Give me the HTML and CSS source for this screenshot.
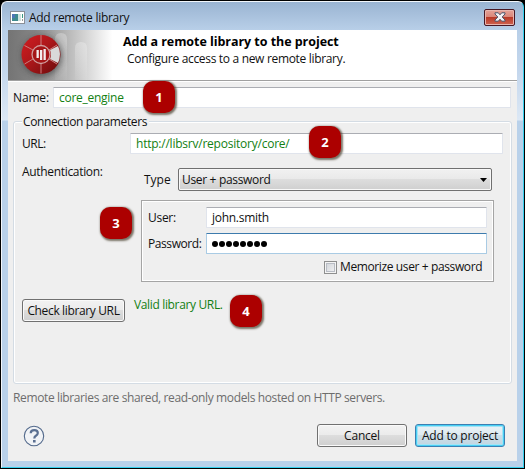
FILE: index.html
```
<!DOCTYPE html>
<html lang="en">
<head>
<meta charset="utf-8">
<title>Add remote library</title>
<link rel="stylesheet" href="styles.css">
</head>
<body>
<div class="backdrop">
<div class="window">
  <div class="titlebar">
    <svg class="app-icon" width="15" height="13" viewBox="0 0 15 13">
      <rect x=".5" y=".5" width="14" height="12" fill="#fff" stroke="#8a8f96"/>
      <rect x="2" y="3" width="6" height="7" fill="#3f8a8e"/>
      <rect x="2" y="3" width="3" height="4" fill="#4f77b5"/>
      <rect x="8" y="3" width="3" height="7" fill="#cfe2dc"/>
      <rect x="12" y="3" width="1" height="4" fill="#3d9a83"/>
      <rect x="12" y="8" width="1" height="2" fill="#999"/>
    </svg>
    <span class="title">Add remote library</span>
    <div class="close">
      <svg width="12" height="10" viewBox="0 0 12 10">
        <path d="M1 .8h3.300L6 2.800 7.700.8H11V2L8.200 5 11 8v1.200H7.700L6 7.200 4.300 9.200H1V8l2.800-3L1 2z" fill="#f2f2f5" stroke="#4c5268"/>
      </svg>
    </div>
  </div>
  <div class="content">
    <div class="header">
      <svg class="banner" width="110" height="50" viewBox="0 0 110 50">
        <defs>
          <linearGradient id="fade"><stop offset="0" stop-color="#747474"/><stop offset=".25" stop-color="#858585"/><stop offset=".5" stop-color="#b0b0b0"/><stop offset=".95" stop-color="#fff"/></linearGradient>
          <linearGradient id="red" x1="0" y1="0" x2="1" y2="1"><stop offset="0" stop-color="#d31e22"/><stop offset=".45" stop-color="#ad171a"/><stop offset="1" stop-color="#680b0c"/></linearGradient>
          <linearGradient id="bar" x1="0" y1="0" x2="0" y2="1"><stop offset="0" stop-color="#fff" stop-opacity=".28"/><stop offset="1" stop-color="#fff" stop-opacity=".04"/></linearGradient>
          <filter id="soft" x="-30%" y="-30%" width="160%" height="160%"><feGaussianBlur stdDeviation="3"/></filter>
        </defs>
        <rect width="110" height="50" fill="url(#fade)"/>
        <path d="M47 50V9q0-6 6-6t6 6v41z" fill="url(#bar)"/>
        <path d="M67 50V18q0-6 6-6t6 6v32z" fill="url(#bar)"/>
        <circle cx="34" cy="26" r="20" fill="#333" opacity=".6" filter="url(#soft)"/>
        <circle cx="33" cy="24.500" r="19.500" fill="url(#red)"/>
        <path d="M42 20l8-4q4 8 0 17l-8-4q2-4 0-9z" fill="#d9d9d9"/>
        <path d="M33 5v10M33 34v9.500M25 20l-8.500-4.500M25 29l-8.500 5M41 20l8-5M41 29l8 5" stroke="#c98080" stroke-width="1"/>
        <circle cx="33" cy="24.500" r="9" fill="#a51517" stroke="#d0a0a0" stroke-width="1.300"/>
        <path d="M28.500 20h2.300v8h-2.300zM32 20h2.300v10H32zM35.500 19h2.300v11h-2.300z" fill="#f4eeee"/>
      </svg>
      <div class="heading">
        <div><b class="head-title">Add a remote library to the project</b></div>
        <div class="head-sub"><span>Configure access to a new remote library.</span></div>
      </div>
    </div>
    <div class="name-row"><label class="t-name">Name:</label><div class="field name-field"><span class="t-core">core_engine</span></div></div>
    <fieldset class="group">
      <legend><span class="t-legend">Connection parameters</span></legend>
      <div class="url-row"><label class="t-url">URL:</label><div class="field url-field"><span class="t-http">http://libsrv/repository/core/</span></div></div>
      <div class="auth">
        <label class="auth-label"><span class="t-auth">Authentication:</span></label>
        <div class="auth-main">
          <div class="type-row"><label class="t-type">Type</label>
            <div class="select"><span class="t-select">User + password</span><svg width="7" height="4" viewBox="0 0 7 4"><path d="M0 0h7L3.500 4z"/></svg></div>
          </div>
          <div class="panel">
            <div class="cred"><label><span class="t-user">User:</span></label><div class="field"><span class="t-john">john.smith</span></div></div>
            <div class="cred"><label><span class="t-pass">Password:</span></label><div class="field focused"><span class="dots"><i></i><i></i><i></i><i></i><i></i><i></i><i></i><i></i></span></div></div>
            <div class="memo"><span class="check"></span><span class="t-memo">Memorize user + password</span></div>
          </div>
        </div>
      </div>
      <div class="check-row"><div class="button check-btn"><span class="t-check">Check library URL</span></div><span class="valid">Valid library URL.</span></div>
    </fieldset>
    <div class="note"><span class="t-note">Remote libraries are shared, read-only models hosted on HTTP servers.</span></div>
    <div class="footer">
      <svg class="help" width="22" height="22" viewBox="0 0 22 22">
        <circle cx="11" cy="11" r="9.700" fill="#f1f3f6" stroke="#52698b" stroke-width="1.100"/>
        <path d="M7.700 8.300Q7.800 5.200 11.300 5.200q3.500 0 3.500 2.900 0 1.500-1.900 2.700-1.600 1-1.600 2.700" fill="none" stroke="#5a6f91" stroke-width="2.200"/>
        <rect x="10" y="15" width="2.600" height="2.500" fill="#5a6f91"/>
      </svg>
      <div class="button"><span class="t-cancel">Cancel</span></div>
      <div class="button default"><span class="t-add">Add to project</span></div>
    </div>
  </div>
  <div class="badge b1">1</div>
  <div class="badge b2">2</div>
  <div class="badge b3">3</div>
  <div class="badge b4">4</div>
</div>
</div>
</body>
</html>
```
FILE: styles.css
```
* { box-sizing: border-box; }
body { margin: 0; background: #fff; font: 12px/16px "Open Sans", "Noto Sans", sans-serif; color: #111; white-space: nowrap; overflow: hidden; }
svg { display: block; flex: none; }
.backdrop { width: 525px; height: 469px; background: #000; padding: 1px; }
.window { position: relative; width: 523px; height: 467px; border: 1px solid #35d0ee; border-top-color: #f2f6fb; border-left-color: #f2f6fb; border-radius: 6px 6px 0 0; padding: 0 6px 5px 6px; background: linear-gradient(#9ab4d2 0, #b8cfe8 28px, #c4d7ed 70px, #dce8f5 118px, #b9d1ea 119px); }
.titlebar { height: 28px; display: flex; align-items: center; padding: 2px 2px 0 2px; }
.title { margin-left: 4px; padding-top: 2px; letter-spacing: -.28px; }
.close { margin-left: auto; width: 31px; height: 17px; border: 1px solid #481824; border-radius: 2px; box-shadow: inset 0 0 0 1px #e8b5ae; background: linear-gradient(#e5a298, #d98578 48%, #b93a28 50%, #cf6350); display: flex; align-items: center; justify-content: center; }
.content { height: 431px; background: #efefef; display: flex; flex-direction: column; }
.header { height: 51px; flex: none; display: flex; background: #fff; border-bottom: 1px solid #a0a0a0; box-shadow: 0 1px #fff; }
.heading { padding: 4px 0 0 5px; }
.head-title { font-size: 12.500px; letter-spacing: -.05px; color: #000; }
.head-sub { padding: 1px 0 0 4px; letter-spacing: -.32px; }
.field { height: 21px; flex: none; background: #fff; border: 1px solid #e0e4ec; border-top-color: #abadb3; border-radius: 1px; padding: 1px 5px; display: flex; align-items: center; line-height: 17px; }
.field.focused { border-color: #a9cbe4; border-top-color: #3d7bad; }
.name-row { display: flex; align-items: center; margin: 6px 6px 0 5px; }
.name-row label { width: 40px; letter-spacing: -.15px; }
.name-field { width: 458px; color: #128012; }
.t-core { letter-spacing: -.27px; }
.group { position: relative; margin: 6px 5px 0; padding: 0 8px; border: 1px solid #d4dce4; border-radius: 3px; box-shadow: inset 0 0 0 1px #fff; height: 270px; min-width: 0; }
.group legend { padding: 0 2px 0 1px; margin: 0; height: 15px; line-height: 15px; background: #efefef; }
.t-legend { letter-spacing: -.38px; }
.url-row { display: flex; align-items: center; margin-top: 4px; }
.url-row label { width: 109px; letter-spacing: -.5px; }
.url-field { width: 373px; color: #128012; }
.t-http { letter-spacing: -.23px; }
.auth { display: flex; margin-top: 14px; }
.auth-label { width: 119px; margin-top: -4px; }
.t-auth { letter-spacing: -.32px; }
.type-row { display: flex; align-items: center; }
.type-row label { width: 37px; padding-left: 3px; }
.select { width: 314px; height: 23px; border: 1px solid #707070; border-radius: 2px; box-shadow: inset 0 0 0 1px #f8f8f8; background: linear-gradient(#f1f1f1, #e9e9e9 49%, #dddddd 50%, #cfcfcf); display: flex; align-items: center; justify-content: space-between; padding: 0 4px 0 3px; }
.t-select { letter-spacing: -.33px; }
.panel { width: 353px; height: 82px; margin-top: 9px; border: 1px solid #a5a5a5; box-shadow: inset 0 0 0 1px #fff; padding: 6px 6px; }
.cred { display: flex; align-items: center; height: 21px; margin-bottom: 5px; }
.cred label { width: 58px; }
.cred .field { width: 281px; }
.t-user, .t-john { letter-spacing: -.28px; }
.t-pass { letter-spacing: -.42px; }
.dots { display: flex; gap: 1px; }
.dots i { width: 6px; height: 6px; border-radius: 50%; background: #000; }
.memo { display: flex; align-items: center; margin-left: 176px; }
.check { flex: none; width: 13px; height: 13px; border: 1px solid #8e8f8f; background: linear-gradient(135deg, #cdd1d7, #f5f5f5); box-shadow: inset 0 0 0 1px #f4f4f4, inset 0 0 0 2px #b8bcc4; margin: 0 3px 0 0; }
.t-memo { letter-spacing: -.38px; }
.button { width: 90px; height: 23px; border: 1px solid #707070; border-radius: 3px; box-shadow: inset 0 0 0 1px #fafafa; background: linear-gradient(#f2f2f2, #ebebeb 49%, #dddddd 50%, #cfcfcf); display: flex; align-items: center; justify-content: center; }
.check-btn { width: 103px; }
.t-check { letter-spacing: -.36px; }
.check-row { display: flex; margin-top: 17px; }
.valid { margin-left: 9px; margin-top: -2px; color: #128012; letter-spacing: -.35px; }
.note { padding-left: 5px; margin-top: 6px; color: #6d6d6d; }
.t-note { letter-spacing: -.375px; }
.footer { display: flex; align-items: center; margin-top: 18px; padding: 0 12px 0 15px; gap: 8px; }
.help { margin-right: auto; }
.t-cancel, .t-add { letter-spacing: -.22px; }
.default { border-color: #3c7fb1; box-shadow: inset 0 0 0 1px #48d0f5, inset 0 0 0 2px #a5e3f5; background: linear-gradient(#eaf2f6, #dfebf1 49%, #cedfe8 50%, #bfd5e1); }
.badge { position: absolute; width: 32px; height: 32px; border-radius: 10px; background: #ac0000; color: #fff; font-weight: 700; font-size: 13px; line-height: 32px; text-align: center; box-shadow: 1px 1px 2px 1px rgba(60,50,30,.65); }
.b1 { left: 141px; top: 79px; }
.b2 { left: 307px; top: 124px; }
.b3 { left: 98px; top: 205px; }
.b4 { left: 228px; top: 293px; }
```
